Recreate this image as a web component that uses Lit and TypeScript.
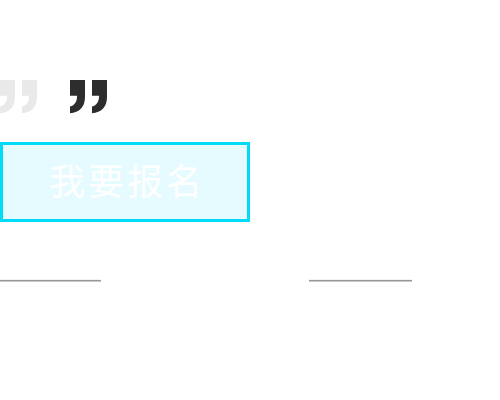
import { LitElement, html, css } from "lit";
import { customElement } from "lit/decorators.js";

@customElement("app-root")
export class AppRoot extends LitElement {
  static styles = css`
    :host {
      display: block;
      padding-top: 80px;
      background: #fff;
      font-family: "Noto Sans CJK SC", sans-serif;
    }
    .quotes {
      display: flex;
      gap: 33px;
      height: 34px;
    }
    .quote {
      width: 37px;
      height: 34px;
      fill: #e9e9e9;
    }
    .dark {
      fill: #2d2d2d;
    }
    .signup {
      display: block;
      box-sizing: border-box;
      width: 50%;
      min-width: 220px;
      height: 80px;
      margin: 28px 0 57px;
      padding: 0 0 6px 4px;
      border: 3px solid #00dcf8;
      background: #e5fbff;
      color: #fff;
      font: 400 36px/68px "Noto Sans CJK SC", sans-serif;
      letter-spacing: 3px;
      cursor: pointer;
    }
    .rules {
      display: flex;
      gap: 208px;
    }
    .rule {
      box-sizing: border-box;
      width: 101px;
      height: 3px;
      margin: 0;
      border: solid;
      border-width: 1px 0;
      border-color: #f3f3f3 transparent #cacaca;
      background: #979797;
    }
    .wide {
      width: 103px;
    }
  `;

  private quote(tone: string) {
    return html`<svg class="quote ${tone}" viewBox="0 0 37 34" aria-hidden="true">
      <path d="M0 0H15V17C15 27 9.5 32.5 0 33.3V26.6C4.8 25.4 7.2 21.5 7 15.8H0Z" />
      <path d="M22 0H37V17C37 27 31.5 32.5 22 33.3V26.6C26.8 25.4 29.2 21.5 29 15.8H22Z" />
    </svg>`;
  }

  render() {
    return html`
      <div class="quotes">${this.quote("")}${this.quote("dark")}</div>
      <button class="signup" type="button">我要报名</button>
      <div class="rules">
        <hr class="rule" />
        <hr class="rule wide" />
      </div>
    `;
  }
}
